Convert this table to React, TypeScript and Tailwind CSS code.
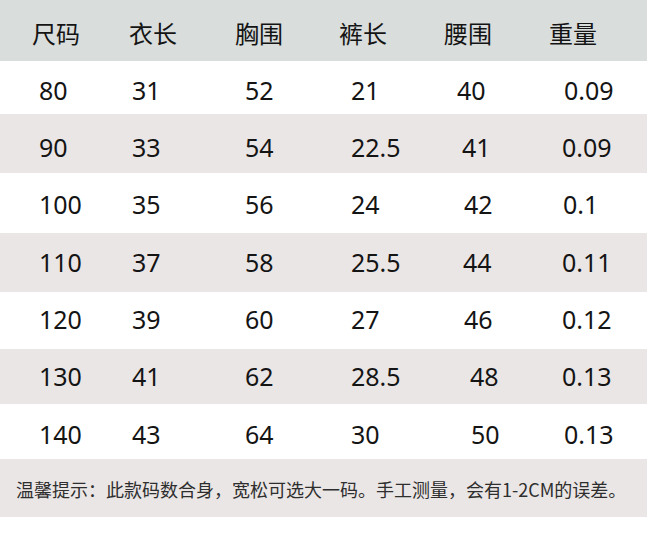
import React from 'react';

// column boxes: widths add up to the page width
const colW = ["w-[125px]", "w-[105px]", "w-[105px]", "w-[105px]", "w-[105px]", "w-[102px]"];

const headers = [
  { label: "尺码", pl: "pl-[32px]" },
  { label: "衣长", pl: "pl-[4px]" },
  { label: "胸围", pl: "pl-[5px]" },
  { label: "裤长", pl: "pl-[4px]" },
  { label: "腰围", pl: "pl-[4px]" },
  { label: "重量", pl: "pl-[4px]" },
];

// fixed offsets for the first four columns
const basePl = ["pl-[39px]", "pl-[7px]", "pl-[15px]", "pl-[16px]"];

// the source table is hand placed, so waist and weight wander a bit per row
const rows = [
  { bg: "bg-white", h: "h-[53px]", shift: "pt-[5px]", cells: ["80", "31", "52", "21", "40", "0.09"], waist: "pl-[17px]", weight: "pl-[19px]" },
  { bg: "bg-[#ebe6e6]", h: "h-[59px]", shift: "pt-[8px]", cells: ["90", "33", "54", "22.5", "41", "0.09"], waist: "pl-[22px]", weight: "pl-[17px]" },
  { bg: "bg-white", h: "h-[60px]", shift: "pt-[3px]", cells: ["100", "35", "56", "24", "42", "0.1"], waist: "pl-[24px]", weight: "pl-[18px]" },
  { bg: "bg-[#ebe6e6]", h: "h-[59px]", shift: "pt-[0px]", cells: ["110", "37", "58", "25.5", "44", "0.11"], waist: "pl-[23px]", weight: "pl-[17px]" },
  { bg: "bg-white", h: "h-[57px]", shift: "pb-[2px]", cells: ["120", "39", "60", "27", "46", "0.12"], waist: "pl-[24px]", weight: "pl-[17px]" },
  { bg: "bg-[#ebe6e6]", h: "h-[55px]", shift: "pt-[0px]", cells: ["130", "41", "62", "28.5", "48", "0.13"], waist: "pl-[30px]", weight: "pl-[17px]" },
  { bg: "bg-white", h: "h-[55px]", shift: "pt-[5px]", cells: ["140", "43", "64", "30", "50", "0.13"], waist: "pl-[31px]", weight: "pl-[19px]" },
];

const App: React.FC = () => {
  return (
    <div className="w-[647px] h-[540px] bg-white text-[#141414] font-['Noto_Sans','Noto_Sans_CJK_SC',sans-serif] overflow-hidden">
      {/* header */}
      <div className="flex items-center h-[61px] bg-[#d9dddc] pt-[4px] text-[24px] leading-none">
        {headers.map((h, i) => (
          <div key={h.label} className={`${colW[i]} ${h.pl} shrink-0 font-['Noto_Sans_CJK_SC',sans-serif]`}>
            {h.label}
          </div>
        ))}
      </div>

      {/* size rows */}
      {rows.map((r) => (
        <div key={r.cells[0]} className={`flex items-center ${r.h} ${r.bg} ${r.shift} text-[25px] leading-none`}>
          {r.cells.map((c, i) => {
            const pl = i < 4 ? basePl[i] : i === 4 ? r.waist : r.weight;
            return (
              <div key={i} className={`${colW[i]} ${pl} shrink-0`}>
                {c}
              </div>
            );
          })}
        </div>
      ))}

      {/* note */}
      <div className="flex items-center h-[58px] bg-[#ebe6e6] pl-[16px] pt-[1px] text-[18px] leading-none text-[#2e2e2e] font-['Noto_Sans_CJK_SC',sans-serif]">
        温馨提示：此款码数合身，宽松可选大一码。手工测量，会有1-2CM的误差。
      </div>
    </div>
  );
};

export default App;
